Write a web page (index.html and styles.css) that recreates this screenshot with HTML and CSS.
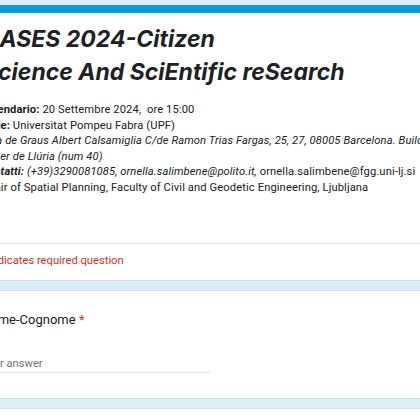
FILE: index.html
```html
<!DOCTYPE html>
<html lang="it">
<head>
    <meta charset="UTF-8">
    <meta name="viewport" content="width=device-width, initial-scale=1.0">
    <title>CASES 2024-Citizen Science And SciEntific reSearch</title>
    <link rel="stylesheet" href="styles.css">
</head>
<body>
    <div class="page">
        <div class="card header-card">
            <div class="header">
                <h1 class="title">CASES 2024-Citizen<br>Science And SciEntific reSearch</h1>
                <div class="desc">
                    <b>Calendario:</b> 20 Settembre 2024,&nbsp; ore 15:00<br>
                    <b>Sede:</b> Universitat Pompeu Fabra (UPF)<br>
                    <i>Sala de Graus Albert Calsamiglia C/de Ramon Trias Fargas, 25, 27, 08005 Barcelona. Building<br>Roger de Llúria (num 40)</i><br>
                    <b><i>Contatti:</i></b> <i>(+39)3290081085, ornella.salimbene@polito.it,</i> ornella.salimbene@fgg.uni-lj.si<br>
                    Chair of Spatial Planning, Faculty of Civil and Geodetic Engineering, Ljubljana
                </div>
            </div>
            <div class="required">* Indicates required question</div>
        </div>

        <div class="card question">
            <div class="q-title">Nome-Cognome <span class="star">*</span></div>
            <div class="answer">Your answer</div>
        </div>

        <div class="card next"></div>
    </div>
</body>
</html>
```

FILE: styles.css
```css
body {
    margin: 0;
    background-color: #daeffa;
    font-family: Roboto, "Liberation Sans", Arial, sans-serif;
    color: #202124;
    overflow: hidden;
}
.page {
    width: 540px;
    margin-left: -40px;
    padding-top: 5px;
}
.card {
    background-color: white;
    border: 1px solid #dadce0;
    border-radius: 6px;
    margin-bottom: 9px;
    padding-left: 20px;
}
.header-card {
    border-top: 8px solid #039be5;
    border-radius: 6px 6px 0 0;
}
.header {
    padding: 10px 0 47px;
    border-bottom: 1px solid #e3e5e8;
}
.title {
    margin: 0;
    padding-left: 2px;
    font-family: Inter, "Open Sans", sans-serif;
    font-size: 23px;
    line-height: 33px;
    font-weight: 700;
    font-style: italic;
    color: #202124;
}
.desc {
    margin-top: 13px;
    width: 490px;
    font-size: 11.2px;
    line-height: 15.6px;
    letter-spacing: 0.1px;
}
.required {
    padding: 9px 0 12px;
    font-size: 11.2px;
    line-height: 15.6px;
    color: #d93025;
}
.question {
    padding-top: 20px;
    padding-bottom: 25px;
}
.q-title {
    font-size: 13px;
    line-height: 17px;
}
.star {
    color: #d93025;
}
.answer {
    margin-top: 28px;
    width: 230px;
    padding-bottom: 0;
    font-size: 11.2px;
    line-height: 15.6px;
    color: #70757a;
    border-bottom: 1px solid #e4e6e8;
}
.next {
    height: 40px;
}
```
